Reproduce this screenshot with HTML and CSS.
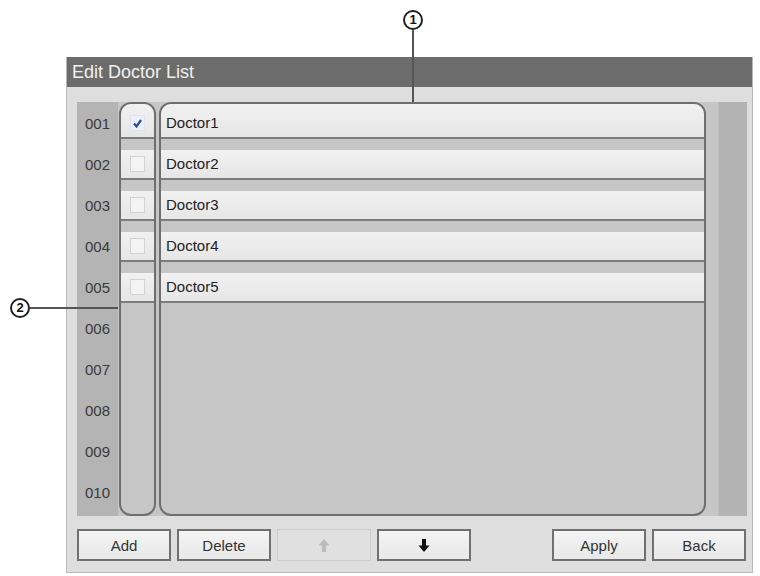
FILE: index.html
```html
<!DOCTYPE html>
<html lang="en">
<head>
    <meta charset="UTF-8">
    <meta name="viewport" content="width=device-width, initial-scale=1.0">
    <title>Edit Doctor List</title>
    <link rel="stylesheet" href="styles.css">
</head>
<body>
    <div class="page">
        <div class="dialog">
            <div class="title">Edit Doctor List</div>
            <div class="content">
                <div class="list">
                    <div class="nums">
                        <div class="num">001</div>
                        <div class="num">002</div>
                        <div class="num">003</div>
                        <div class="num">004</div>
                        <div class="num">005</div>
                        <div class="num">006</div>
                        <div class="num">007</div>
                        <div class="num">008</div>
                        <div class="num">009</div>
                        <div class="num">010</div>
                    </div>
                    <div class="col check-col">
                        <div class="cell">
                            <span class="box checked">
                                <svg width="11" height="11" viewBox="0 0 11 11"><path d="M2 5.5 L4.5 8.5 L9 2" fill="none" stroke="#2a4b9c" stroke-width="2.2"/></svg>
                            </span>
                        </div>
                        <div class="cell"><span class="box"></span></div>
                        <div class="cell"><span class="box"></span></div>
                        <div class="cell"><span class="box"></span></div>
                        <div class="cell"><span class="box"></span></div>
                    </div>
                    <div class="col name-col">
                        <div class="cell">Doctor1</div>
                        <div class="cell">Doctor2</div>
                        <div class="cell">Doctor3</div>
                        <div class="cell">Doctor4</div>
                        <div class="cell">Doctor5</div>
                    </div>
                    <div class="scrollbar"></div>
                </div>
                <div class="buttons">
                    <button class="btn">Add</button>
                    <button class="btn">Delete</button>
                    <button class="btn disabled">
                        <svg width="12" height="15" viewBox="0 0 12 15"><path d="M6 1 L11.5 7.5 L8 7.5 L8 14 L4 14 L4 7.5 L0.5 7.5 Z" fill="#bcbcbc"/></svg>
                    </button>
                    <button class="btn">
                        <svg width="12" height="15" viewBox="0 0 12 15"><path d="M4 1 L8 1 L8 7.5 L11.5 7.5 L6 14 L0.5 7.5 L4 7.5 Z" fill="#111"/></svg>
                    </button>
                    <button class="btn push">Apply</button>
                    <button class="btn">Back</button>
                </div>
            </div>
        </div>

        <!-- callouts -->
        <div class="callout c1"><span class="circle">1</span></div>
        <div class="line v1"></div>
        <div class="callout c2"><span class="circle">2</span></div>
        <div class="line h2"></div>
    </div>
</body>
</html>
```

FILE: styles.css
```css
body {
    margin: 0;
    background: #fff;
    font-family: "Liberation Sans", Arial, sans-serif;
    color: #333;
}
.page {
    position: relative;
    padding: 57px 0 0 66px;
}
.dialog {
    width: 687px;
    box-sizing: border-box;
    background: #dedede;
    border: 1px solid #b8b8b8;
    border-top: none;
}
.title {
    height: 30px;
    line-height: 30px;
    background: #6c6c6c;
    color: #f0f0f0;
    font-size: 18px;
    padding-left: 5px;
}
.content {
    padding: 15px 5px 11px 10px;
}
.list {
    display: flex;
    height: 414px;
    background: #c6c6c6;
}
.nums {
    width: 41px;
    background: #b4b4b4;
    padding-top: 7px;
    box-sizing: border-box;
    display: flex;
    flex-direction: column;
    gap: 11px;
    margin-right: 1px;
}
.num {
    height: 30px;
    line-height: 30px;
    text-align: center;
    font-size: 15px;
    color: #3a3a3a;
}
.col {
    border: 2px solid #6e6e6e;
    border-radius: 12px;
    overflow: hidden;
    padding-top: 5px;
    display: flex;
    flex-direction: column;
    gap: 11px;
}
.check-col {
    width: 37px;
    box-sizing: border-box;
    margin-right: 3px;
}
.name-col {
    width: 547px;
    box-sizing: border-box;
    margin-right: 12px;
}
.cell {
    height: 30px;
    box-sizing: border-box;
    background: linear-gradient(#f1f1f1, #e6e6e6);
    border-bottom: 2px solid #7c7c7c;
    flex-shrink: 0;
}
.cell:first-child {
    margin-top: -5px;
    height: 35px;
    padding-top: 5px;
}
.name-col .cell {
    font-size: 15px;
    line-height: 28px;
    padding-left: 5px;
    color: #222;
}
.check-col .cell {
    display: flex;
    justify-content: center;
    align-items: center;
}
.box {
    width: 15px;
    height: 16px;
    box-sizing: border-box;
    border: 1px solid #d2d2d2;
    background: #f3f3f3;
    display: flex;
    align-items: center;
    justify-content: center;
}
.box.checked {
    background: #eaf0fb;
    border-color: #dfe4ee;
}
.scrollbar {
    width: 29px;
    background: #b3b3b3;
    border-left: 1px solid #bdbdbd;
    box-sizing: border-box;
}
.buttons {
    display: flex;
    gap: 6px;
    margin-top: 13px;
    padding-right: 1px;
}
.btn {
    width: 94px;
    height: 32px;
    box-sizing: border-box;
    border: 2px solid #707070;
    background: linear-gradient(#f4f4f4, #e8e8e8);
    font-family: "Liberation Sans", Arial, sans-serif;
    font-size: 15px;
    color: #333;
    padding: 0;
    display: flex;
    align-items: center;
    justify-content: center;
}
.btn.disabled {
    border: 1px solid #cdcdcd;
    background: #e0e0e0;
}
.btn.push {
    margin-left: auto;
}
.circle {
    display: block;
    width: 20px;
    height: 20px;
    box-sizing: border-box;
    border: 2px solid #222;
    border-radius: 50%;
    font-size: 13px;
    font-weight: bold;
    line-height: 16px;
    text-align: center;
    color: #111;
    background: #fff;
}
.callout {
    position: absolute;
}
.c1 {
    left: 403px;
    top: 10px;
}
.c2 {
    left: 10px;
    top: 298px;
}
.line {
    position: absolute;
    background: #555;
}
.v1 {
    left: 412px;
    top: 30px;
    width: 2px;
    height: 72px;
}
.h2 {
    left: 30px;
    top: 307px;
    width: 88px;
    height: 2px;
}
```
